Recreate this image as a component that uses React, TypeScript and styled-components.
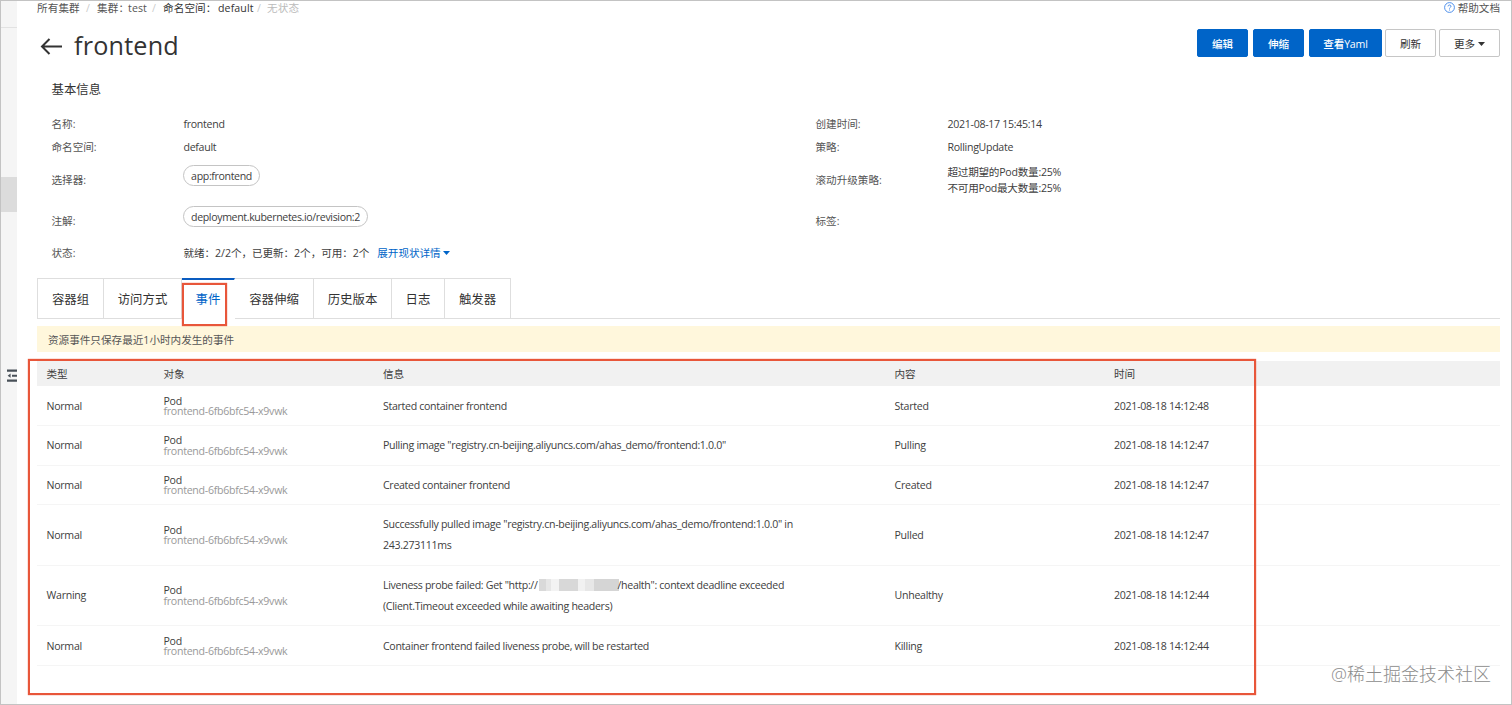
import React from 'react';
import styled, { createGlobalStyle } from 'styled-components';

const GlobalStyle = createGlobalStyle`
  *, *::before, *::after { box-sizing: border-box; }
  body {
    margin: 0;
    overflow: hidden;
    background: #fff;
    color: #404040;
    font: 10.6px/14px 'Open Sans', 'Noto Sans CJK SC', sans-serif;
    white-space: nowrap;
  }
`;

const Page = styled.div`
  position: relative;
  display: flex;
  width: 1512px;
  height: 705px;
  border: 1px solid #c3c3c3;
  overflow: hidden;
`;

const Rail = styled.aside`
  display: flex;
  flex-direction: column;
  flex: none;
  width: 16px;
  background: #f5f5f5;
`;

const RailTop = styled.div`
  height: 27px;
  border-bottom: 1px solid #e2e2e2;
`;

const RailHandle = styled.div`
  height: 35px;
  margin-top: 149px;
  background: #dcdcdc;
`;

const RailIcon = styled.svg`
  display: block;
  flex: none;
  margin: 157px 0 0 6px;
`;

const Main = styled.main`
  display: flex;
  flex-direction: column;
  flex: 1;
  min-width: 0;
  padding: 0 11px 0 20px;
`;

const TopBar = styled.div`
  display: flex;
  justify-content: space-between;
  align-items: center;
  height: 13px;
`;

const Crumbs = styled.nav`
  display: flex;
`;

const Crumb = styled.span<{ $w: number; $color?: string }>`
  width: ${p => p.$w}px;
  color: ${p => p.$color ?? '#555'};
  letter-spacing: 0.1px;
`;

const Help = styled.a`
  display: flex;
  align-items: center;
  gap: 3px;
  color: #555;
`;

const Header = styled.header`
  display: flex;
  justify-content: space-between;
  align-items: flex-start;
  height: 59px;
  padding-top: 15px;
`;

const TitleGroup = styled.div`
  display: flex;
  align-items: center;
  gap: 11px;
  height: 34px;
  padding-left: 3px;
`;

const Title = styled.h1`
  margin: 0 0 2px;
  color: #333;
  font-size: 25.2px;
  font-weight: 400;
  line-height: 34px;
  letter-spacing: 0.2px;
`;

const Actions = styled.div`
  display: flex;
`;

const Button = styled.button<{ $w: number; $primary?: boolean; $gap?: number }>`
  display: flex;
  align-items: center;
  justify-content: center;
  gap: 3px;
  width: ${p => p.$w}px;
  height: 28px;
  margin: 0 0 0 ${p => p.$gap ?? 5}px;
  padding: 2px 0 0;
  border: 1px solid ${p => (p.$primary ? '#0064c8' : '#c6c6c6')};
  border-radius: 2px;
  background: ${p => (p.$primary ? '#0064c8' : '#fff')};
  color: ${p => (p.$primary ? '#fff' : '#333')};
  font: inherit;
  font-weight: ${p => (p.$primary ? 500 : 400)};
  letter-spacing: ${p => (p.$primary ? -0.2 : 0)}px;
`;

const SectionTitle = styled.h2`
  margin: 9px 0 0 14.5px;
  color: #333;
  font-size: 12.4px;
  font-weight: 400;
  line-height: 16px;
`;

const Info = styled.section`
  display: grid;
  grid-template-columns: 132px 632px 132px 1fr;
  grid-template-rows: 22px 23px 43px 40px 24px;
  align-items: center;
  margin: 15px 0 0 14.5px;
`;

const Label = styled.span`
  color: #555;
`;

const Value = styled.div<{ $ls?: number }>`
  line-height: 16px;
  letter-spacing: ${p => p.$ls ?? -0.3}px;
`;

const Tag = styled.span<{ $w: number }>`
  display: block;
  width: ${p => p.$w}px;
  height: 21px;
  margin: 0 0 9px -0.5px;
  border: 1px solid #c4c4c4;
  border-radius: 11px;
  line-height: 20px;
  letter-spacing: -0.36px;
  text-align: center;
`;

const Status = styled.div`
  display: flex;
  letter-spacing: -0.06px;
`;

const Expand = styled.a`
  display: flex;
  align-items: center;
  gap: 2px;
  margin-left: 8px;
  color: #0064c8;
`;

const Tabs = styled.div`
  display: flex;
  height: 41px;
  margin-top: 13px;
  border-bottom: 1px solid #dedede;
`;

const Tab = styled.div<{ $w: number; $active?: boolean }>`
  width: ${p => p.$w}px;
  height: ${p => (p.$active ? 41 : 40)}px;
  border-top: ${p => (p.$active ? '2px solid #0a5cc0' : '1px solid #dedede')};
  border-right: 1px solid ${p => (p.$active ? 'transparent' : '#dedede')};
  background: #fff;
  color: ${p => (p.$active ? '#0064c8' : '#333')};
  font-size: 12.4px;
  line-height: ${p => (p.$active ? 39 : 41)}px;
  text-align: center;
  &:first-child { border-left: 1px solid #dedede; }
`;

const Notice = styled.div`
  height: 26px;
  margin-top: 7px;
  padding-left: 11px;
  background: #fff7dc;
  color: #555;
  line-height: 28px;
`;

const Table = styled.div`
  margin-top: 9px;
`;

const Row = styled.div<{ $h: number; $head?: boolean }>`
  display: grid;
  grid-template-columns: 117px 219.5px 511.5px 219.5px 1fr;
  align-items: center;
  height: ${p => p.$h}px;
  padding-left: 9.5px;
  border-bottom: ${p => (p.$head ? 'none' : '1px solid #f5f5f5')};
  background: ${p => (p.$head ? '#f1f1f1' : '#fff')};
  letter-spacing: ${p => (p.$head ? 0 : -0.27)}px;
`;

const Pod = styled.div`
  padding-top: 1px;
  line-height: 10.5px;
  span { display: block; }
  span + span { color: #999; }
`;

const Message = styled.div`
  padding-top: 1px;
  line-height: 21px;
  letter-spacing: -0.31px;
`;

const Mosaic = styled.span`
  display: inline-flex;
  width: 80px;
  height: 12px;
  margin: 0 -1px 0 1px;
  vertical-align: -2px;
`;

const Block = styled.i<{ $w: number; $c: string }>`
  width: ${p => p.$w}px;
  background: ${p => p.$c};
`;

const Highlight = styled.div<{ $x: number; $y: number; $w: number; $h: number }>`
  position: absolute;
  left: ${p => p.$x}px;
  top: ${p => p.$y}px;
  width: ${p => p.$w}px;
  height: ${p => p.$h}px;
  border: 2px solid #e8563a;
  box-shadow: 0 0 1px #e8563a;
`;

const Watermark = styled.div`
  position: absolute;
  right: 20px;
  bottom: 18px;
  color: #8c8c8c;
  font-size: 18px;
  font-weight: 300;
  line-height: 24px;
`;

const Caret = () => (
  <svg width="7" height="4" viewBox="0 0 7 4"><path d="M0 0h7L3.5 4z" fill="currentColor" /></svg>
);

interface EventRow {
  h: number;
  type: string;
  message: React.ReactNode;
  reason: string;
  time: string;
}

const events: EventRow[] = [
  { h: 40, type: 'Normal', message: 'Started container frontend', reason: 'Started', time: '48' },
  { h: 39.5, type: 'Normal', message: 'Pulling image "registry.cn-beijing.aliyuncs.com/ahas_demo/frontend:1.0.0"', reason: 'Pulling', time: '47' },
  { h: 39.5, type: 'Normal', message: 'Created container frontend', reason: 'Created', time: '47' },
  {
    h: 60.5, type: 'Normal', reason: 'Pulled', time: '47',
    message: <>Successfully pulled image "registry.cn-beijing.aliyuncs.com/ahas_demo/frontend:1.0.0" in<br />243.273111ms</>,
  },
  {
    h: 60.5, type: 'Warning', reason: 'Unhealthy', time: '44',
    message: (
      <>
        Liveness probe failed: Get "http://
        <Mosaic>
          <Block $w={7} $c="#d9d9d9" /><Block $w={5} $c="#e6e6e6" /><Block $w={8} $c="#f3f3f3" />
          <Block $w={19} $c="#d8d8d8" /><Block $w={7} $c="#f1f1f1" /><Block $w={9} $c="#e7e7e7" />
          <Block $w={25} $c="#d5d5d5" />
        </Mosaic>
        /health": context deadline exceeded<br />(Client.Timeout exceeded while awaiting headers)
      </>
    ),
  },
  { h: 40, type: 'Normal', message: 'Container frontend failed liveness probe, will be restarted', reason: 'Killing', time: '44' },
];

export default function App() {
  return (
    <Page>
      <GlobalStyle />
      <Rail>
        <RailTop />
        <RailHandle />
        <RailIcon width="10" height="13" viewBox="0 0 10 13" fill="#485058">
          <path d="M0 0.5h10v2.3H0zM5 5.7h5v2H5zM0 10.4h10v2.3H0zM3.6 4.6v4.2L0.6 6.7z" />
        </RailIcon>
      </Rail>
      <Main>
        <TopBar>
          <Crumbs>
            <Crumb $w={49}>所有集群</Crumb>
            <Crumb $w={11} $color="#ccc">/</Crumb>
            <Crumb $w={31}>集群：</Crumb>
            <Crumb $w={24}>test</Crumb>
            <Crumb $w={11} $color="#ccc">/</Crumb>
            <Crumb $w={55} $color="#333">命名空间：</Crumb>
            <Crumb $w={39} $color="#333">default</Crumb>
            <Crumb $w={10} $color="#ccc">/</Crumb>
            <Crumb $w={40} $color="#bbb">无状态</Crumb>
          </Crumbs>
          <Help>
            <svg width="11" height="11" viewBox="0 0 11 11" fill="none" stroke="#3c83e8" strokeWidth="0.9">
              <circle cx="5.5" cy="5.5" r="4.9" />
              <path d="M4 4.4C4 2.6 7 2.6 7 4.3 7 5.4 5.5 5.3 5.5 6.6M5.5 7.5v1" />
            </svg>
            帮助文档
          </Help>
        </TopBar>
        <Header>
          <TitleGroup>
            <svg width="23" height="18" viewBox="0 0 23 18" fill="none" stroke="#333" strokeWidth="2">
              <path d="M22 9.5H2M9.5 2L2 9.5 9.5 17" />
            </svg>
            <Title>frontend</Title>
          </TitleGroup>
          <Actions>
            <Button $w={51} $primary>编辑</Button>
            <Button $w={51} $primary>伸缩</Button>
            <Button $w={73} $primary>查看Yaml</Button>
            <Button $w={51} $gap={3}>刷新</Button>
            <Button $w={61} $gap={3}>更多<Caret /></Button>
          </Actions>
        </Header>
        <SectionTitle>基本信息</SectionTitle>
        <Info>
          <Label>名称:</Label><Value>frontend</Value>
          <Label>创建时间:</Label><Value>2021-08-17 15:45:14</Value>
          <Label>命名空间:</Label><Value>default</Value>
          <Label>策略:</Label><Value>RollingUpdate</Value>
          <Label>选择器:</Label><Tag $w={77}>app:frontend</Tag>
          <Label>滚动升级策略:</Label><Value $ls={-0.25}>超过期望的Pod数量:25%<br />不可用Pod最大数量:25%</Value>
          <Label>注解:</Label><Tag $w={185}>deployment.kubernetes.io/revision:2</Tag>
          <Label>标签:</Label><span />
          <Label>状态:</Label>
          <Status>就绪：2/2个，已更新：2个，可用：2个<Expand>展开现状详情<Caret /></Expand></Status>
        </Info>
        <Tabs>
          <Tab $w={67}>容器组</Tab>
          <Tab $w={78}>访问方式</Tab>
          <Tab $w={53} $active>事件</Tab>
          <Tab $w={79}>容器伸缩</Tab>
          <Tab $w={78}>历史版本</Tab>
          <Tab $w={53}>日志</Tab>
          <Tab $w={66}>触发器</Tab>
        </Tabs>
        <Notice>资源事件只保存最近1小时内发生的事件</Notice>
        <Table>
          <Row $h={25} $head>
            <span>类型</span><span>对象</span><span>信息</span><span>内容</span><span>时间</span>
          </Row>
          {events.map((e, i) => (
            <Row key={i} $h={e.h}>
              <span>{e.type}</span>
              <Pod><span>Pod</span><span>frontend-6fb6bfc54-x9vwk</span></Pod>
              <Message>{e.message}</Message>
              <span>{e.reason}</span>
              <span>2021-08-18 14:12:{e.time}</span>
            </Row>
          ))}
        </Table>
      </Main>
      <Highlight $x={181} $y={282} $w={45} $h={43} />
      <Highlight $x={27} $y={358} $w={1228} $h={336} />
      <Watermark>@稀土掘金技术社区</Watermark>
    </Page>
  );
}
